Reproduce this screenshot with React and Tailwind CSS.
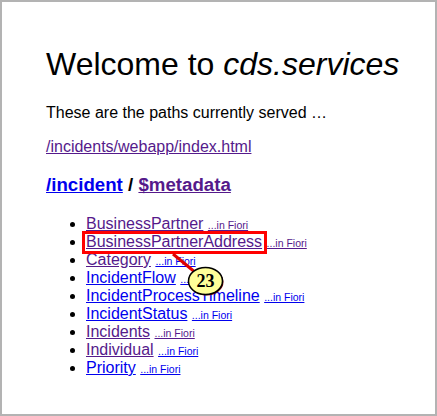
const links = [
  ["BusinessPartner", "v", "v"],
  ["BusinessPartnerAddress", "v", "v"],
  ["Category", "v", "b"],
  ["IncidentFlow", "b", "b"],
  ["IncidentProcessTimeline", "b", "b"],
  ["IncidentStatus", "b", "b"],
  ["Incidents", "v", "v"],
  ["Individual", "v", "b"],
  ["Priority", "b", "b"],
];
const cls = { v: "text-[#551a8b] underline", b: "text-[#0000ee] underline" };

export default function App() {
  return (
    <div
      className="relative w-[437px] h-[416px] border-2 border-[#b3b3b3] bg-white text-black overflow-hidden pl-[44px] pt-[44px]"
      style={{ fontFamily: '"Liberation Sans", Arial, sans-serif' }}
    >
      <h1 className="text-[32px] leading-[37px] font-normal">
        Welcome to <i>cds.services</i>
      </h1>
      <p className="text-[16px] leading-[18px] mt-[21px]">These are the paths currently served …</p>
      <p className="text-[16px] leading-[18px] mt-[16px]">
        <a className={cls.v}>/incidents/webapp/index.html</a>
      </p>
      <h2 className="text-[18.7px] leading-[21px] font-bold mt-[18px]">
        <a className={cls.b}>/incident</a> / <a className={cls.v}>$metadata</a>
      </h2>
      <ul className="list-disc pl-[40px] mt-[20px] text-[16px] leading-[18px]">
        {links.map(([name, a, b]) => (
          <li key={name}>
            <a className={cls[a]}>{name}</a>{" "}
            <a className={`${cls[b]} text-[10.5px] leading-[10px]`}>...in Fiori</a>
          </li>
        ))}
      </ul>
      <div className="absolute left-[80px] top-[229px] w-[185px] h-[23px] border-[3px] border-[#ff0000]" />
      <svg className="absolute left-0 top-0" width="433" height="412" viewBox="2 2 433 412">
        <line x1="173" y1="254" x2="196" y2="273" stroke="#e00000" strokeWidth="3" />
        <ellipse cx="206.5" cy="282" rx="17" ry="13.5" fill="#800000" />
        <ellipse cx="205.5" cy="281" rx="17" ry="13.5" fill="#ffff99" stroke="#000" strokeWidth="1.5" />
      </svg>
      <div
        className="absolute left-[186px] top-[268px] w-[35px] h-[22px] text-center text-[18px] leading-[22px] font-bold"
        style={{ fontFamily: '"Liberation Serif", "Times New Roman", serif' }}
      >
        23
      </div>
    </div>
  );
}
